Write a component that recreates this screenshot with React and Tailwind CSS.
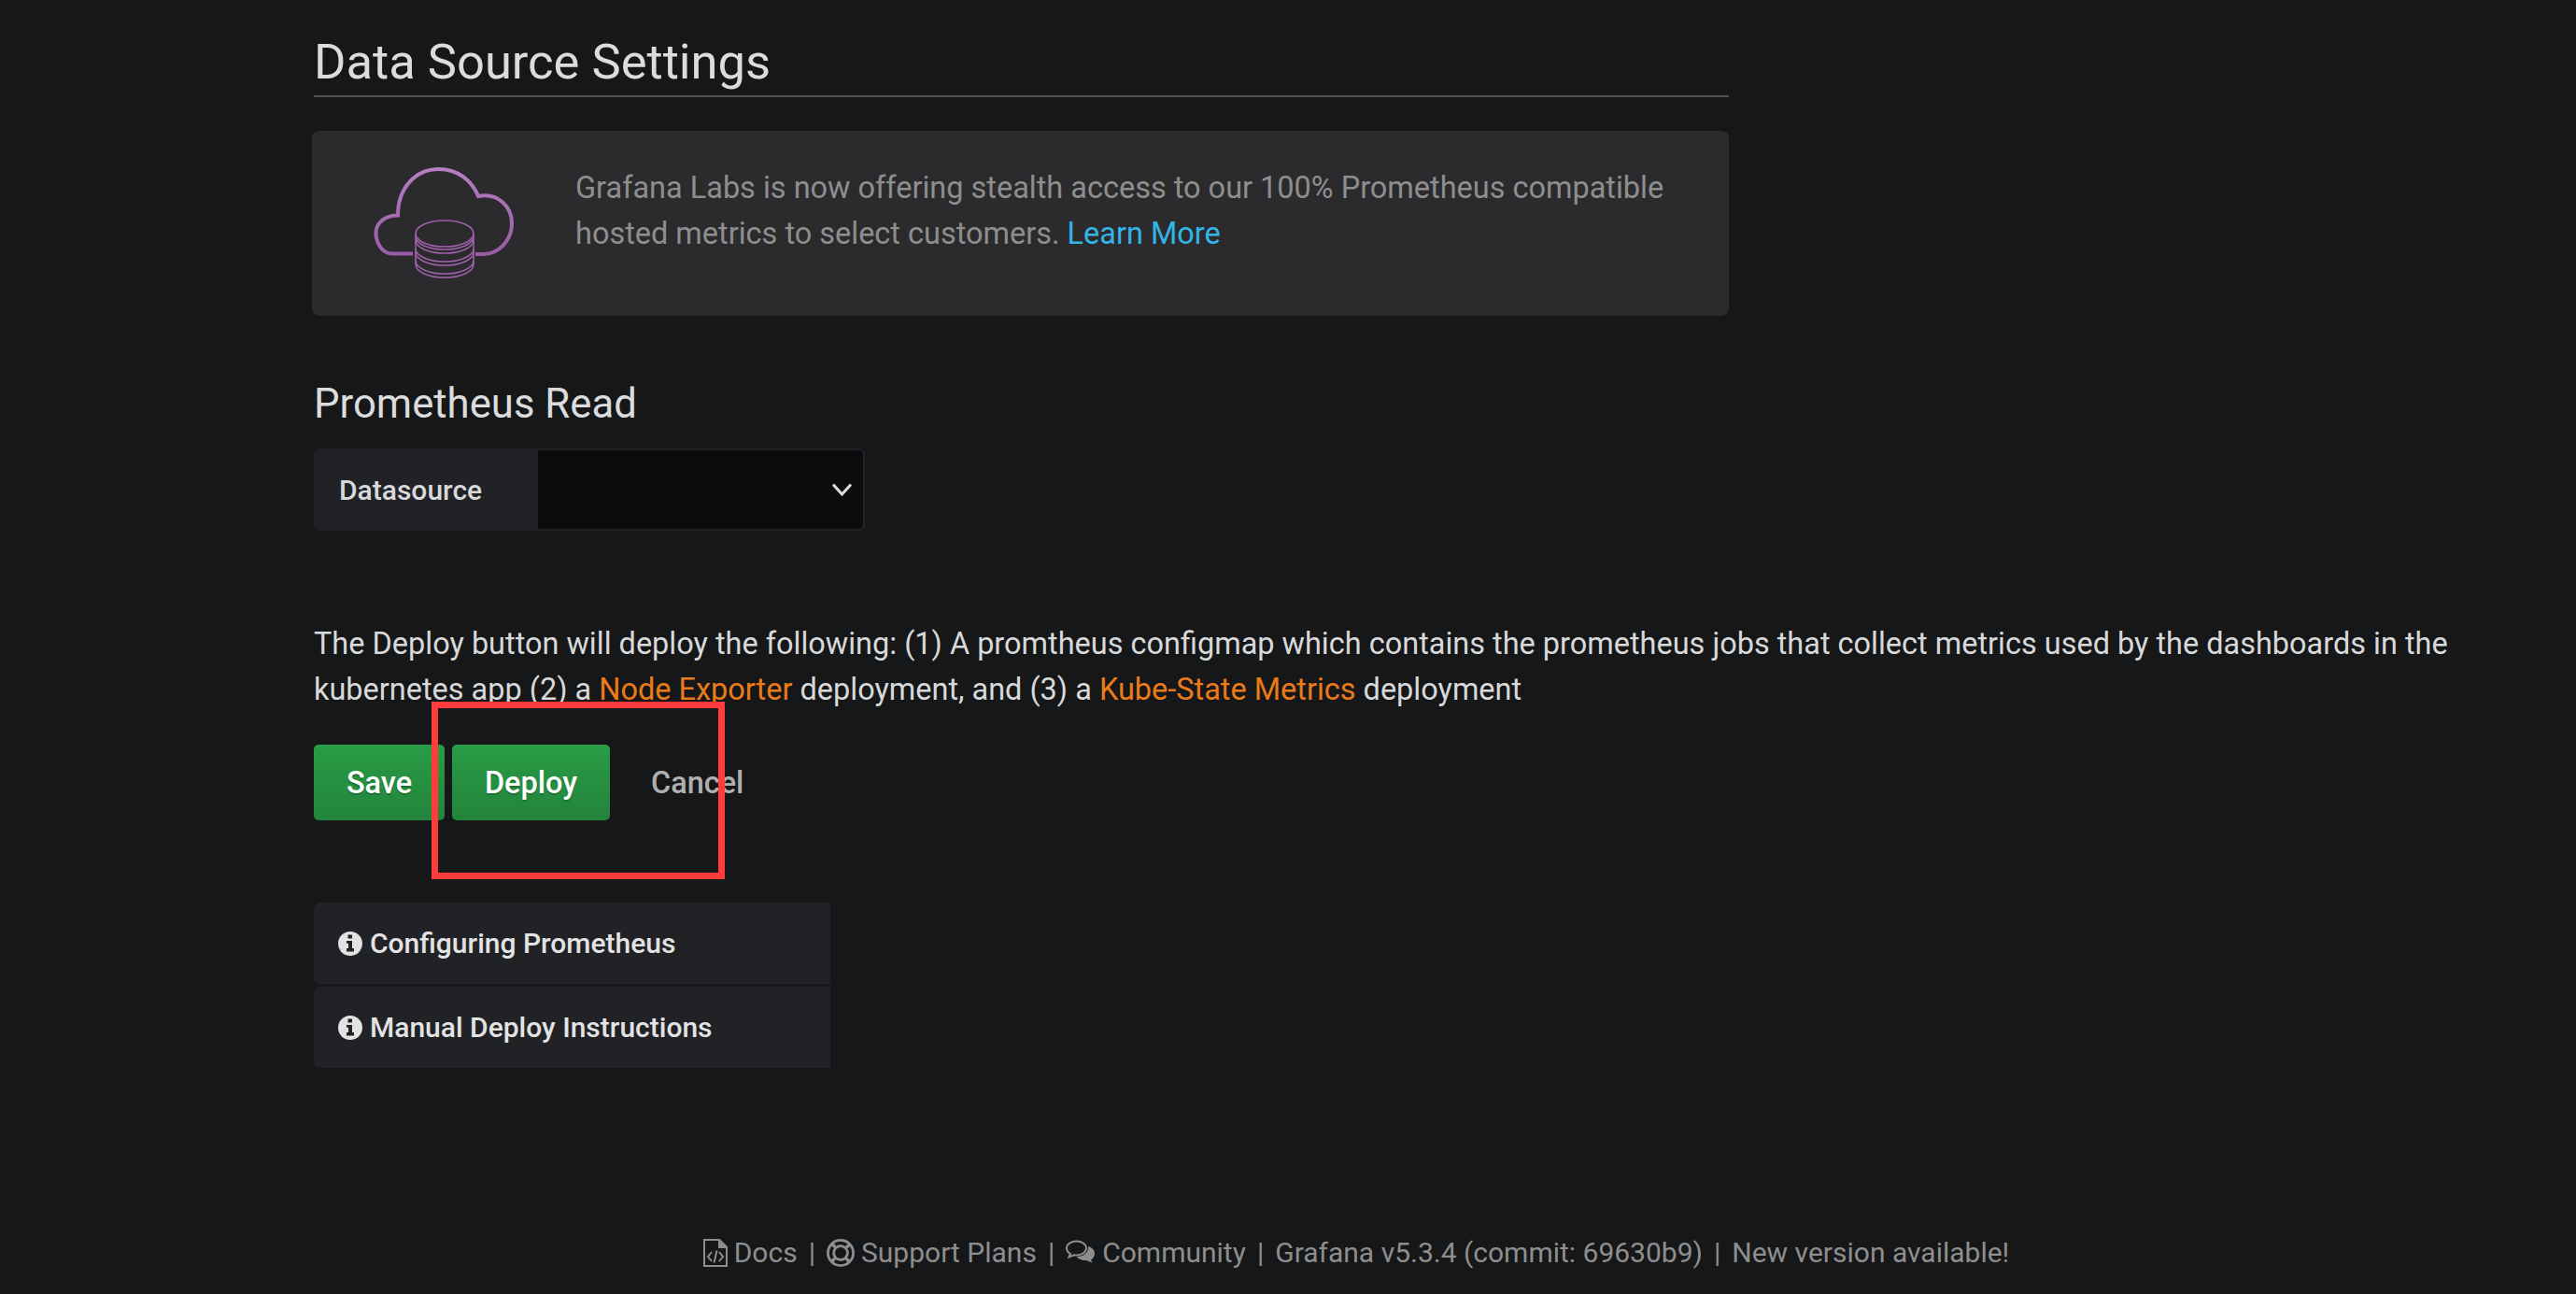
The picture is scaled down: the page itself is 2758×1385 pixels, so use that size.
import React from "react";

const CloudIcon = () => (
  <svg width="190" height="150" viewBox="0 0 190 150" fill="none" className="mb-[7px] shrink-0">
    <defs>
      <linearGradient id="cloudGrad" x1="0" y1="0" x2="0" y2="1">
        <stop offset="0%" stopColor="#b57fc1" />
        <stop offset="100%" stopColor="#9a5ca6" />
      </linearGradient>
    </defs>
    <path
      d="M62 110.5H40C29 110.5 22.5 99 22.5 88C22.5 78 32 69.5 46 69.5C46 40 65 20 90 20C110 20 125 32 132 49C153 45 168 60 168 78C168 97 153 111 138 111H129"
      stroke="url(#cloudGrad)"
      strokeWidth="4"
    />
    <g stroke="#9c5fa8" strokeWidth="1.6">
      <ellipse cx="96" cy="89" rx="31" ry="14" />
      <path d="M65 89V122M127 89V122" />
      <path d="M65 92a31 14 0 0 0 62 0M65 96a31 14 0 0 0 62 0" />
      <path d="M65 105a31 14 0 0 0 62 0M65 109a31 14 0 0 0 62 0" />
      <path d="M65 118a31 14 0 0 0 62 0M65 122a31 14 0 0 0 62 0" />
    </g>
  </svg>
);

const InfoIcon = () => (
  <svg width="26" height="26" viewBox="0 0 26 26" className="mr-[8px] shrink-0">
    <circle cx="13" cy="13" r="13" fill="#e3e3e4" />
    <path fill="#212226" d="M10.5 3.5H15V7.5H10.5ZM9 10H15V18H17V21.5H9V18H11V12.8H9Z" />
  </svg>
);

const DocsIcon = () => (
  <svg width="26" height="30" viewBox="0 0 26 30" fill="none" stroke="#8e8e8e" strokeWidth="2" className="mr-[7px] shrink-0">
    <path d="M1 1H17L25 9V29H1Z" />
    <path d="M17 1V9H25Z" fill="#8e8e8e" />
    <path d="M9 14L5 19L9 24M17 14L21 19L17 24M14.5 12.5L11.5 25.5" />
  </svg>
);

const SupportIcon = () => (
  <svg width="30" height="30" viewBox="0 0 30 30" fill="none" className="mr-[7px] shrink-0">
    <circle cx="15" cy="15" r="15" fill="#8e8e8e" />
    <circle cx="15" cy="15" r="10.5" stroke="#161719" strokeWidth="3.5" strokeDasharray="13 3.5" strokeDashoffset="6.5" />
    <circle cx="15" cy="15" r="6" fill="#161719" />
  </svg>
);

const CommunityIcon = () => (
  <svg width="32" height="28" viewBox="0 0 32 28" fill="none" className="mr-[7px] shrink-0">
    <path
      d="M11.5 1.5C5.5 1.5 1 5 1 9C1 11.5 2.5 13.5 5 15L3.5 18.5L9 16.3C9.5 16.4 10.5 16.5 11.5 16.5C17.5 16.5 22 13 22 9C22 5 17.5 1.5 11.5 1.5Z"
      stroke="#8e8e8e"
      strokeWidth="2"
    />
    <path
      fill="#8e8e8e"
      d="M24 7C28 8 31 11 31 14.5C31 17.5 29.5 20 27 21.5L28.5 24.5L22 22C18 22.5 14.5 21 11.5 18C17 18 25 15 24 7Z"
    />
  </svg>
);

const InfoRow = ({ title }) => (
  <div className="flex h-[87px] items-center rounded-l-[7px] bg-[#212226] pl-[26px] text-[30px] font-medium text-[#e3e3e4]">
    <InfoIcon />
    {title}
  </div>
);

const Sep = () => <span className="mx-[12px]">|</span>;

export default function App() {
  return (
    <div className="relative flex h-[1385px] flex-col overflow-hidden bg-[#161719] font-['Roboto',sans-serif] text-[32.47px] leading-[49px] text-[#d8d9da]">
      <main className="flex-1 pl-[336px] pr-[120px]">
        <div className="w-[1515px]">
          <h2 className="border-b-2 border-[#505052] pt-[36px] pb-[6px] text-[52.5px] leading-[60px] font-normal text-[#dcdcdd]">
            Data Source Settings
          </h2>
          <div className="mt-[36px] -ml-[2px] flex h-[198px] w-[1517px] items-center rounded-[8px] bg-[#2b2b2d] pl-[46px] text-[#8e8e8e]">
            <CloudIcon />
            <p className="mb-[26px] ml-[46px]">
              Grafana Labs is now offering stealth access to our 100% Prometheus compatible
              <br />
              hosted metrics to select customers.{" "}
              <a href="#" className="text-[#33b5e5]">Learn More</a>
            </p>
          </div>
        </div>

        <h3 className="mt-[64px] text-[43.7px] leading-[60px] font-normal text-[#dcdcdd]">Prometheus Read</h3>

        <div className="mt-[18px] flex h-[88px] w-[590px] overflow-hidden rounded-[7px] border-2 border-[#212226]">
          <div className="flex w-[238px] items-center bg-[#212226] pl-[25px] text-[30px] font-medium">Datasource</div>
          <div className="flex flex-1 items-center justify-end bg-[#0b0c0e] pr-[12px]">
            <svg width="21" height="14" viewBox="0 0 21 14" fill="none" stroke="#d8d9da" strokeWidth="3">
              <path d="M1 1.5L10.5 12L20 1.5" />
            </svg>
          </div>
        </div>

        <p className="mt-[97px]">
          The Deploy button will deploy the following: (1) A promtheus configmap which contains the prometheus jobs that collect metrics used by the dashboards in the
          <br />
          kubernetes app (2) a <a href="#" className="text-[#eb7b18]">Node Exporter</a> deployment, and (3) a{" "}
          <a href="#" className="text-[#eb7b18]">Kube-State Metrics</a> deployment
        </p>

        <div className="mt-[34px] flex h-[81px] items-stretch text-[32.47px] font-medium">
          <button className="w-[140px] rounded-[5px] bg-gradient-to-b from-[#299c46] to-[#23843b] pt-[2px] text-white [text-shadow:0_2px_1px_rgba(0,0,0,0.2)]">Save</button>
          <button className="ml-[8px] w-[169px] rounded-[5px] bg-gradient-to-b from-[#299c46] to-[#23843b] pt-[2px] text-white [text-shadow:0_2px_1px_rgba(0,0,0,0.2)]">Deploy</button>
          <button className="ml-[44px] pt-[2px] text-[#b0b0b1]">Cancel</button>
        </div>

        <div className="mt-[88px] flex w-[553px] flex-col gap-[3px]">
          <InfoRow title="Configuring Prometheus" />
          <InfoRow title="Manual Deploy Instructions" />
        </div>
      </main>

      <footer className="flex items-center justify-center pb-[20px] pl-[146px] text-[30px] text-[#8e8e8e]">
        <DocsIcon />
        Docs
        <Sep />
        <SupportIcon />
        Support Plans
        <Sep />
        <CommunityIcon />
        Community
        <Sep />
        Grafana v5.3.4 (commit: 69630b9)
        <Sep />
        New version available!
      </footer>

      {/* red annotation box drawn over the screenshot */}
      <div className="absolute top-[751px] left-[462px] h-[190px] w-[314px] border-[7px] border-[#ff3b3b]" />
    </div>
  );
}
